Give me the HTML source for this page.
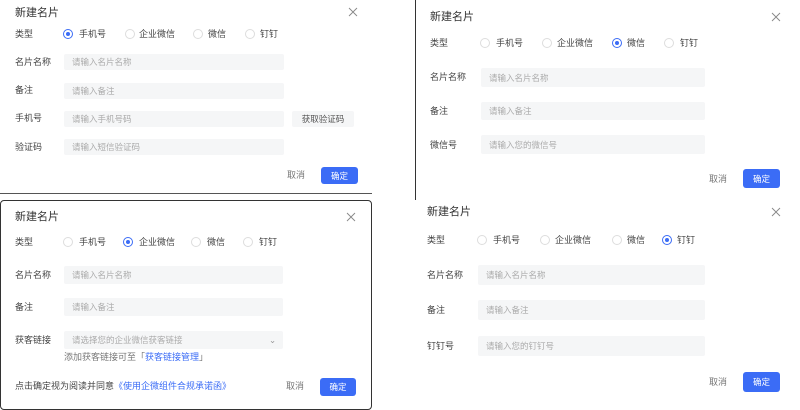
<!DOCTYPE html>
<html><head><meta charset="utf-8"><style>
*{margin:0;padding:0;box-sizing:border-box}
body{width:800px;height:400px;background:#fff;position:relative;overflow:hidden;font-family:"Liberation Sans","Noto Sans CJK SC",sans-serif;font-size:9px;color:#444}
.a{position:absolute;white-space:nowrap;line-height:1}
.t{font-size:11px;color:#333;font-weight:400}
.x{position:absolute;width:10px;height:10px}
.r{position:absolute;width:10px;height:10px;border:1px solid #ddd;border-radius:50%;background:#fff}
.r.on{border-color:#3b6cf6}
.r.on::after{content:"";position:absolute;left:2px;top:2px;width:4px;height:4px;border-radius:50%;background:#3b6cf6}
.i{position:absolute;background:#f5f6f7;border-radius:2px;color:#aaa;padding-left:8px;display:flex;align-items:center;font-size:8.5px}
.b{position:absolute;background:#3b6cf6;color:#fff;border-radius:3px;display:flex;align-items:center;justify-content:center;font-size:8.5px}
.g{color:#777}
</style></head><body>
<svg width="0" height="0" style="position:absolute"><defs><symbol id="cx" viewBox="0 0 10 10"><path d="M1 1L9 9M9 1L1 9" stroke="#888" stroke-width="0.9" fill="none"/></symbol></defs></svg>
<!-- panel 1 -->
<div class="a t" style="left:15px;top:8px">新建名片</div>
<svg class="x" style="left:348px;top:7px"><use href="#cx"/></svg>
<div class="a" style="left:15px;top:30px">类型</div>
<div class="r on" style="left:63px;top:29px"></div><div class="a" style="left:79px;top:30px">手机号</div>
<div class="r" style="left:125px;top:29px"></div><div class="a" style="left:139px;top:30px">企业微信</div>
<div class="r" style="left:193px;top:29px"></div><div class="a" style="left:208px;top:30px">微信</div>
<div class="r" style="left:245px;top:29px"></div><div class="a" style="left:260px;top:30px">钉钉</div>
<div class="a" style="left:15px;top:58px">名片名称</div><div class="i" style="left:64px;top:54px;width:220px;height:16px">请输入名片名称</div>
<div class="a" style="left:15px;top:86px">备注</div><div class="i" style="left:64px;top:83px;width:220px;height:16px">请输入备注</div>
<div class="a" style="left:15px;top:114px">手机号</div><div class="i" style="left:64px;top:111px;width:220px;height:16px">请输入手机号码</div>
<div class="i" style="left:292px;top:111px;width:62px;height:16px;color:#555;justify-content:center;padding:0">获取验证码</div>
<div class="a" style="left:15px;top:143px">验证码</div><div class="i" style="left:64px;top:139px;width:220px;height:16px">请输入短信验证码</div>
<div class="a g" style="left:287px;top:171px">取消</div>
<div class="b" style="left:321px;top:167px;width:37px;height:17px">确定</div>
<div style="position:absolute;left:0;top:193px;width:372px;height:1px;background:#555"></div>
<!-- panel 2 -->
<div style="position:absolute;left:415px;top:0;width:1px;height:200px;background:#333"></div>
<div class="a t" style="left:430px;top:12px">新建名片</div>
<svg class="x" style="left:771px;top:12px"><use href="#cx"/></svg>
<div class="a" style="left:430px;top:39px">类型</div>
<div class="r" style="left:480px;top:38px"></div><div class="a" style="left:496px;top:39px">手机号</div>
<div class="r" style="left:542px;top:38px"></div><div class="a" style="left:557px;top:39px">企业微信</div>
<div class="r on" style="left:612px;top:38px"></div><div class="a" style="left:627px;top:39px">微信</div>
<div class="r" style="left:664px;top:38px"></div><div class="a" style="left:680px;top:39px">钉钉</div>
<div class="a" style="left:430px;top:73px">名片名称</div><div class="i" style="left:481px;top:68px;width:224px;height:19px">请输入名片名称</div>
<div class="a" style="left:430px;top:107px">备注</div><div class="i" style="left:481px;top:102px;width:224px;height:18px">请输入备注</div>
<div class="a" style="left:430px;top:141px">微信号</div><div class="i" style="left:481px;top:135px;width:224px;height:19px">请输入您的微信号</div>
<div class="a g" style="left:709px;top:175px">取消</div>
<div class="b" style="left:743px;top:169px;width:37px;height:19px">确定</div>
<!-- panel 3 -->
<div style="position:absolute;left:0;top:200px;width:372px;height:210px;border:1.5px solid #333;border-radius:4px"></div>
<div class="a t" style="left:15px;top:212px">新建名片</div>
<svg class="x" style="left:346px;top:212px"><use href="#cx"/></svg>
<div class="a" style="left:15px;top:238px">类型</div>
<div class="r" style="left:63px;top:237px"></div><div class="a" style="left:79px;top:238px">手机号</div>
<div class="r on" style="left:123px;top:237px"></div><div class="a" style="left:139px;top:238px">企业微信</div>
<div class="r" style="left:191px;top:237px"></div><div class="a" style="left:207px;top:238px">微信</div>
<div class="r" style="left:243px;top:237px"></div><div class="a" style="left:259px;top:238px">钉钉</div>
<div class="a" style="left:15px;top:271px">名片名称</div><div class="i" style="left:64px;top:266px;width:219px;height:18px">请输入名片名称</div>
<div class="a" style="left:15px;top:303px">备注</div><div class="i" style="left:64px;top:298px;width:219px;height:18px">请输入备注</div>
<div class="a" style="left:15px;top:336px">获客链接</div><div class="i" style="left:64px;top:331px;width:219px;height:18px">请选择您的企业微信获客链接<span style="position:absolute;left:205px;color:#999">⌄</span></div>
<div class="a g" style="left:64px;top:353px">添加获客链接可至「<span style="color:#3b6cf6">获客链接管理</span>」</div>
<div class="a" style="left:15px;top:382px">点击确定视为阅读并同意<span style="color:#3b6cf6">《使用企微组件合规承诺函》</span></div>
<div class="a g" style="left:286px;top:382px">取消</div>
<div class="b" style="left:320px;top:378px;width:36px;height:18px">确定</div>
<!-- panel 4 -->
<div class="a t" style="left:427px;top:207px">新建名片</div>
<svg class="x" style="left:771px;top:207px"><use href="#cx"/></svg>
<div class="a" style="left:427px;top:236px">类型</div>
<div class="r" style="left:477px;top:235px"></div><div class="a" style="left:493px;top:236px">手机号</div>
<div class="r" style="left:540px;top:235px"></div><div class="a" style="left:555px;top:236px">企业微信</div>
<div class="r" style="left:612px;top:235px"></div><div class="a" style="left:627px;top:236px">微信</div>
<div class="r on" style="left:662px;top:235px"></div><div class="a" style="left:677px;top:236px">钉钉</div>
<div class="a" style="left:427px;top:271px">名片名称</div><div class="i" style="left:478px;top:265px;width:227px;height:20px">请输入名片名称</div>
<div class="a" style="left:427px;top:306px">备注</div><div class="i" style="left:478px;top:300px;width:227px;height:20px">请输入备注</div>
<div class="a" style="left:427px;top:342px">钉钉号</div><div class="i" style="left:478px;top:336px;width:227px;height:20px">请输入您的钉钉号</div>
<div class="a g" style="left:709px;top:378px">取消</div>
<div class="b" style="left:743px;top:372px;width:37px;height:20px">确定</div>
</body></html>
